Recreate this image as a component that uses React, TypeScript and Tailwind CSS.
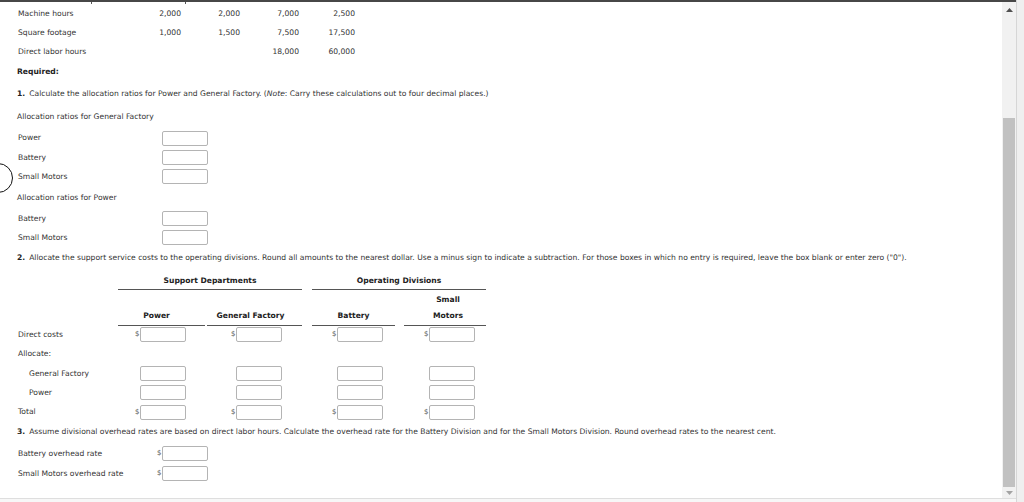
import React from "react";

const Box = () => (
  <div className="h-[15px] w-[46px] shrink-0 rounded-[2px] border border-[#b4b4b4] bg-white" />
);

const Dollar = ({ show = true }: { show?: boolean }) => (
  <span className="w-[5px] shrink-0 text-[7px] leading-none text-[#555]">{show ? "$" : ""}</span>
);

const topRows = [
  { label: "Machine hours", vals: ["2,000", "2,000", "7,000", "2,500"] },
  { label: "Square footage", vals: ["1,000", "1,500", "7,500", "17,500"] },
  { label: "Direct labor hours", vals: ["", "", "18,000", "60,000"] },
];

// column widths and box offsets for part 2
const cols = [
  { w: "w-[89px]", pl: "pl-[17px]" },
  { w: "w-[95px]", pl: "pl-[24px]" },
  { w: "w-[92px]", pl: "pl-[20px]" },
  { w: "w-[82px]", pl: "pl-[20px]" },
];

function AllocRow({ label, indent, dollar, h }: { label: string; indent?: boolean; dollar?: boolean; h: string }) {
  return (
    <div className={`flex items-center ${h}`}>
      <div className={`w-[100px] ${indent ? "pl-[11px]" : ""}`}>{label}</div>
      {cols.map((c, i) => (
        <React.Fragment key={i}>
          {i === 2 && <div className="w-[10px]" />}
          <div className={`flex items-center ${c.w} ${c.pl}`}>
            <Dollar show={!!dollar} />
            <Box />
          </div>
        </React.Fragment>
      ))}
    </div>
  );
}

function RatioRow({ label, h }: { label: string; h: string }) {
  return (
    <div className={`flex items-center ${h}`}>
      <div className="w-[144px]">{label}</div>
      <Box />
    </div>
  );
}

export default function App() {
  return (
    <div className="flex h-[502px] w-[1024px] overflow-hidden bg-white font-['DejaVu_Sans',Verdana,sans-serif] text-[7.6px] leading-none text-[#333]">
      <div className="flex w-[1016px] flex-col">
        <div className="h-[2px] bg-[#474747]" />
        <div className="flex h-[496px]">
          <div className="relative flex-1 pl-[18px] pt-[2px]">
            {/* leftover table borders from the row above */}
            <div className="absolute left-[91px] top-0 h-[2px] w-px bg-[#555]" />
            <div className="absolute left-[185px] top-0 h-[2px] w-px bg-[#555]" />
            {/* focus ring overlay at left edge */}
            <div className="absolute left-[-17px] top-[161px] h-[30px] w-[30px] rounded-full border-[1.5px] border-[#111]" />

            {topRows.map((r) => (
              <div key={r.label} className="grid h-[19px] grid-cols-[130px_33px_59px_59px_56px] items-center">
                <div>{r.label}</div>
                {r.vals.map((v, i) => (
                  <div key={i} className="text-right">
                    {v}
                  </div>
                ))}
              </div>
            ))}

            <div className="-ml-px flex h-[21px] items-center pt-[1px] font-bold text-[#222]">Required:</div>
            <div className="-ml-px flex h-[24px] items-center">
              <span className="mr-[4px] font-bold text-[#222]">1.</span>
              Calculate the allocation ratios for Power and General Factory. (<i>Note</i>: Carry these calculations out to four
              decimal places.)
            </div>
            <div className="-ml-px flex h-[22px] items-center">Allocation ratios for General Factory</div>
            <RatioRow label="Power" h="h-[20px]" />
            <RatioRow label="Battery" h="h-[19px]" />
            <RatioRow label="Small Motors" h="h-[19px]" />
            <div className="-ml-px flex h-[23px] items-center">Allocation ratios for Power</div>
            <RatioRow label="Battery" h="h-[19px]" />
            <RatioRow label="Small Motors" h="h-[19px]" />

            <div className="-ml-px flex h-[22px] items-center">
              <span className="mr-[4px] font-bold text-[#222]">2.</span>
              Allocate the support service costs to the operating divisions. Round all amounts to the nearest dollar. Use a
              minus sign to indicate a subtraction. For those boxes in which no entry is required, leave the box blank or
              enter zero ("0").
            </div>

            <div className="flex h-[21px] font-bold text-[#222]">
              <div className="w-[100px]" />
              <div className="flex w-[184px] items-center justify-center border-b border-[#555] pt-[3px]">Support Departments</div>
              <div className="w-[10px]" />
              <div className="flex w-[174px] items-center justify-center border-b border-[#555] pt-[3px]">Operating Divisions</div>
            </div>
            <div className="flex h-[18px] items-center pt-[2px] font-bold text-[#222]">
              <div className="w-[386px]" />
              <div className="w-[82px] pl-[6px] text-center">Small</div>
            </div>
            <div className="flex h-[18px] font-bold text-[#222]">
              <div className="w-[100px]" />
              <div className="w-[89px]">
                <div className="flex h-full w-[87px] items-center justify-center border-b border-[#555] pb-[2px] pr-[10px]">Power</div>
              </div>
              <div className="flex w-[95px] items-center justify-center border-b border-[#555] pb-[2px] pr-[8px]">General Factory</div>
              <div className="w-[10px]" />
              <div className="w-[92px]">
                <div className="flex h-full w-[83px] items-center justify-center border-b border-[#555] pb-[2px]">Battery</div>
              </div>
              <div className="flex w-[82px] items-center justify-center border-b border-[#555] pb-[2px] pl-[6px]">Motors</div>
            </div>

            <AllocRow label="Direct costs" dollar h="h-[17px]" />
            <div className="flex h-[21px] items-center">Allocate:</div>
            <AllocRow label="General Factory" indent h="h-[19px]" />
            <AllocRow label="Power" indent h="h-[19px]" />
            <AllocRow label="Total" dollar h="h-[20px]" />

            <div className="-ml-px flex h-[20px] items-center">
              <span className="mr-[4px] font-bold text-[#222]">3.</span>
              Assume divisional overhead rates are based on direct labor hours. Calculate the overhead rate for the Battery
              Division and for the Small Motors Division. Round overhead rates to the nearest cent.
            </div>
            <div className="flex h-[22px] items-center pt-[1px]">
              <div className="w-[139px]">Battery overhead rate</div>
              <Dollar />
              <Box />
            </div>
            <div className="flex h-[19px] items-center">
              <div className="w-[139px]">Small Motors overhead rate</div>
              <Dollar />
              <Box />
            </div>
          </div>

          {/* scrollbar */}
          <div className="flex w-[14px] flex-col bg-[#f1f1f1]">
            <div className="flex h-[16px] items-center justify-center">
              <svg width="7" height="4" viewBox="0 0 7 4">
                <path d="M3.5 0L7 4H0z" fill="#505050" />
              </svg>
            </div>
            <div className="h-[100px]" />
            <div className="mx-[1px] h-[369px] bg-[#c1c1c1]" />
            <div className="flex flex-1 items-center justify-center">
              <svg width="7" height="4" viewBox="0 0 7 4">
                <path d="M0 0H7L3.5 4z" fill="#a3a3a3" />
              </svg>
            </div>
          </div>
        </div>
        <div className="flex-1 border-t border-[#dedede] bg-[#f7f7f7]" />
      </div>
      <div className="w-[8px] border-l border-[#d6d6d6] bg-[#efefef]" />
    </div>
  );
}
